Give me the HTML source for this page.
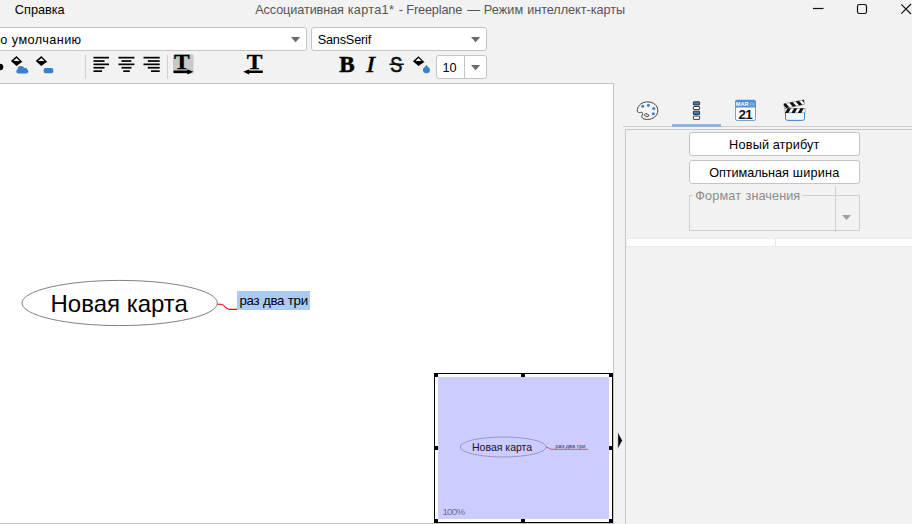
<!DOCTYPE html>
<html lang="ru">
<head>
<meta charset="utf-8">
<title>Ассоциативная карта1* - Freeplane — Режим интеллект-карты</title>
<style>
html,body{margin:0;padding:0;}
body{width:912px;height:524px;overflow:hidden;background:#f2f2f2;position:relative;
  font-family:"Liberation Sans",sans-serif;font-size:13px;color:#000;}
.abs{position:absolute;}
.t{position:absolute;white-space:nowrap;line-height:1;}
.combo{position:absolute;box-sizing:border-box;background:#fff;border:1px solid #c4c4c4;border-radius:3px;}
.btn{position:absolute;box-sizing:border-box;background:#fff;border:1px solid #c4c4c4;border-radius:3px;}
svg{position:absolute;overflow:visible;}
</style>
</head>
<body>

<!-- menu / title row -->
<div id="menu"><span class="t" style="left:14.87px;top:4px;font-size:12.70px;letter-spacing:-0.006px;color:#000;">Справка </span></div>
<div id="title"><span class="t" style="left:255.20px;top:4px;font-size:12.70px;letter-spacing:-0.105px;color:#555555;">Ассоциативная </span><span class="t" style="left:347.74px;top:4px;font-size:12.70px;letter-spacing:0.284px;color:#555555;">карта1* </span><span class="t" style="left:398.65px;top:4px;font-size:12.70px;letter-spacing:0.000px;color:#555555;">- </span><span class="t" style="left:406.28px;top:4px;font-size:12.70px;letter-spacing:-0.139px;color:#555555;">Freeplane </span><span class="t" style="left:467.30px;top:4px;font-size:12.70px;letter-spacing:0.000px;color:#555555;">— </span><span class="t" style="left:483.78px;top:4px;font-size:12.70px;letter-spacing:0.055px;color:#555555;">Режим </span><span class="t" style="left:527.14px;top:4px;font-size:12.70px;letter-spacing:-0.039px;color:#555555;">интеллект-карты </span></div>

<!-- window controls -->
<svg style="left:0;top:0" width="912" height="20">
  <line x1="813" y1="8.5" x2="823.5" y2="8.5" stroke="#111" stroke-width="1.2"/>
  <rect x="857.5" y="4.5" width="9" height="9" rx="1.8" fill="none" stroke="#111" stroke-width="1.2"/>
  <path d="M901.3 4.3 L911 14 M901.3 13.7 L911 4" stroke="#111" stroke-width="1.2" fill="none"/>
</svg>

<!-- combos row -->
<div class="combo" style="left:-10px;top:27px;width:317px;height:24px;"></div>
<div id="c1"><span class="t" style="left:0.19px;top:34px;font-size:12.70px;letter-spacing:0.000px;color:#000;">о </span><span class="t" style="left:11.80px;top:34px;font-size:12.70px;letter-spacing:0.405px;color:#000;">умолчанию </span></div>
<svg style="left:291px;top:37px" width="10" height="6"><path d="M0 0 L9.2 0 L4.6 5.2 Z" fill="#6a6a6a"/></svg>

<div class="combo" style="left:311px;top:27px;width:176px;height:24px;"></div>
<div id="c2"><span class="t" style="left:317.69px;top:34px;font-size:12.70px;letter-spacing:-0.185px;color:#000;">SansSerif </span></div>
<svg style="left:471px;top:37px" width="10" height="6"><path d="M0 0 L9.2 0 L4.6 5.2 Z" fill="#6a6a6a"/></svg>

<!-- toolbar row -->

<svg id="tbsvg" style="left:0;top:52px" width="440" height="30">
  <!-- y offsets relative to 52 -->
  <circle cx="0" cy="15" r="3.3" fill="#000"/>
  <!-- bucket 1 -->
  <g id="bk1" transform="translate(10.9,4.1)">
    <path d="M5.6 0 L11.8 6.2 L10.6 6.2 L5.6 9.9 L0 5 Z" fill="#000"/>
    <path d="M5.6 1.9 L8.7 4.8 L2.5 4.8 Z" fill="#f2f2f2"/>
  </g>
  <g id="cloud" fill="#3a82c8"><rect x="16.3" y="17.3" width="12" height="4.2" rx="2.1"/><circle cx="20.9" cy="17.4" r="3.3"/><circle cx="25" cy="18" r="2.3"/></g>
  <!-- bucket 2 -->
  <g transform="translate(35.7,4.1)">
    <path d="M5.6 0 L11.8 6.2 L10.6 6.2 L5.6 9.9 L0 5 Z" fill="#000"/>
    <path d="M5.6 1.9 L8.7 4.8 L2.5 4.8 Z" fill="#f2f2f2"/>
  </g>
  <rect x="43.7" y="16" width="9.6" height="5.2" rx="1.8" fill="#3a82c8"/>
  <rect x="85" y="3" width="1" height="24" fill="#cdcdcd"/>
  <!-- align left -->
  <g fill="#000">
    <rect x="93.5" y="4.8" width="15.5" height="1.7"/>
    <rect x="93.5" y="8.2" width="11" height="1.7"/>
    <rect x="93.5" y="11.5" width="15.5" height="1.7"/>
    <rect x="93.5" y="14.9" width="11" height="1.7"/>
    <rect x="93.5" y="18.3" width="8.5" height="1.7"/>
    <!-- center -->
    <rect x="118.5" y="4.8" width="15.9" height="1.7"/>
    <rect x="121.5" y="8.2" width="9.9" height="1.7"/>
    <rect x="118.5" y="11.5" width="15.9" height="1.7"/>
    <rect x="121.5" y="14.9" width="9.9" height="1.7"/>
    <rect x="123.2" y="18.3" width="6.6" height="1.7"/>
    <!-- right -->
    <rect x="143.5" y="4.8" width="16.2" height="1.7"/>
    <rect x="147.8" y="8.2" width="11.9" height="1.7"/>
    <rect x="143.5" y="11.5" width="16.2" height="1.7"/>
    <rect x="147.8" y="14.9" width="11.9" height="1.7"/>
    <rect x="151" y="18.3" width="8.7" height="1.7"/>
  </g>
  <rect x="167" y="3" width="1" height="24" fill="#cdcdcd"/>
  <!-- T ltr -->
  <rect x="173" y="2" width="20.5" height="20" rx="2.5" fill="#c8c8c8"/>
  <text id="T1" transform="translate(181.8,16.5) scale(1.12,1)" x="0" y="0" text-anchor="middle" font-family="Liberation Serif, serif" font-weight="bold" font-size="21" fill="#000" stroke="#000" stroke-width="0.3">T</text>
  <path d="M173.5 18.6 H187.3 V17.3 L193.3 19.8 L187.3 22.5 V20.9 H173.5 Z" fill="#000"/>
  <!-- T rtl -->
  <text id="T2" transform="translate(254.7,16.5) scale(1.12,1)" x="0" y="0" text-anchor="middle" font-family="Liberation Serif, serif" font-weight="bold" font-size="21" fill="#000" stroke="#000" stroke-width="0.3">T</text>
  <path d="M262.8 18.6 H249.2 V17.3 L243.2 19.8 L249.2 22.5 V20.9 H262.8 Z" fill="#000"/>
  <!-- B I S -->
  <text id="B" x="339.3" y="20.1" font-family="Liberation Serif, serif" font-weight="bold" font-size="23" fill="#000" stroke="#000" stroke-width="0.6">B</text>
  <text id="I" transform="translate(366.2,20.1) scale(1.12,1)" x="0" y="0" font-family="Liberation Serif, serif" font-style="italic" font-size="23" fill="#000" stroke="#000" stroke-width="0.55">I</text>
  <text id="S" transform="translate(390.3,20) scale(0.84,1)" x="0" y="0" font-family="Liberation Sans, sans-serif" font-size="21.5" fill="#111" stroke="#111" stroke-width="0.7">S</text>
  <rect x="389.4" y="11.5" width="14.5" height="1.5" fill="#111"/>
  <!-- bucket drop -->
  <g transform="translate(412.9,4.2)">
    <path d="M5.6 0 L11.8 6.2 L10.6 6.2 L5.6 9.9 L0 5 Z" fill="#000"/>
    <path d="M5.6 1.9 L8.7 4.8 L2.5 4.8 Z" fill="#f2f2f2"/>
  </g>
  <path d="M426.45 13.1 C427.6 15 430 16.3 430 17.8 a3.55 3.55 0 0 1 -7.1 0 C422.9 16.3 425.3 15 426.45 13.1 Z" fill="#3a82c8"/>
</svg>


<div class="combo" style="left:436px;top:55px;width:51px;height:24px;"></div>
<div class="abs" style="left:464px;top:56px;width:1px;height:22px;background:#c4c4c4;"></div>
<div id="c3"><span class="t" style="left:442.41px;top:62px;font-size:12.70px;letter-spacing:-0.078px;color:#000;">10 </span></div>
<svg style="left:471px;top:65px" width="10" height="6"><path d="M0 0 L9.2 0 L4.6 5.2 Z" fill="#6a6a6a"/></svg>

<!-- map area -->
<div class="abs" id="map" style="left:-1px;top:83px;width:613px;height:439px;background:#fff;border:1px solid #c4c4c4;box-sizing:content-box;"></div>


<!-- map content -->
<svg id="mapsvg" style="left:0;top:0" width="626" height="524">
  <ellipse cx="119.7" cy="303" rx="97.7" ry="22.6" fill="#fff" stroke="#808080" stroke-width="1"/>
  <text id="root" x="50.5" y="311.5" font-family="Liberation Sans, sans-serif" font-size="24" fill="#000">Новая карта</text>
  <path d="M217.4 304.2 L221 304.2 C225.5 304.2 224.5 309.4 229.5 309.4 L237.5 309.4" fill="none" stroke="#ff0000" stroke-width="1.1"/>
  <rect x="237" y="291" width="73" height="19" fill="#a9cbf4"/>
  <text id="child" x="239.4" y="304.8" font-family="Liberation Sans, sans-serif" font-size="13.33" letter-spacing="-0.25" fill="#000">раз два три</text>

  <!-- minimap -->
  <rect x="434.5" y="373.5" width="178" height="149" fill="#fff" stroke="#000" stroke-width="1"/>
  <rect x="438" y="377" width="171" height="142" fill="#ccccff"/>
  <g fill="#000">
    <rect x="434" y="373" width="4" height="4"/><rect x="521" y="373" width="4" height="4"/><rect x="609" y="373" width="4" height="4"/>
    <rect x="434" y="446" width="4" height="4"/><rect x="609" y="446" width="4" height="4"/>
    <rect x="434" y="519" width="4" height="4"/><rect x="521" y="519" width="4" height="4"/><rect x="609" y="519" width="4" height="4"/>
  </g>
  <ellipse cx="503.2" cy="447" rx="43" ry="10" fill="none" stroke="#8a8ab0" stroke-width="0.8"/>
  <text id="mroot" x="472" y="451" font-family="Liberation Sans, sans-serif" font-size="10.5" fill="#15152a">Новая карта</text>
  <path d="M546.2 447.3 C549 447.3 549 449.3 552 449.3 L588 449.3" fill="none" stroke="#e0406a" stroke-width="0.9"/>
  <text id="mchild" x="555.5" y="447.9" font-family="Liberation Sans, sans-serif" font-size="5.6" fill="#33334d">раз два три</text>
  <text id="pct" x="442.4" y="515.2" font-family="Liberation Sans, sans-serif" font-size="9.9" letter-spacing="-0.8" fill="#6f6f8f">100%</text>
  <path d="M617.8 431.8 L617.8 449.2 L622.4 440.5 Z" fill="#000" stroke="#fafafa" stroke-width="0.6"/>
</svg>

<!-- right panel -->

<div class="abs" style="left:623px;top:126px;width:289px;height:1px;background:#cdcdcd;"></div>
<div class="abs" style="left:672px;top:124px;width:49px;height:3px;background:#8fb4e2;"></div>
<div class="abs" style="left:625px;top:129px;width:300px;height:401px;border:1px solid #c8c8c8;box-sizing:border-box;"></div>

<svg id="tabs" style="left:0;top:0" width="912" height="130">
  <!-- palette -->
  <path d="M647.5 101.9 C653.5 101.9 657.8 105.6 657.8 110.6 C657.8 115.8 653 119.4 647.5 119.4 C644 119.4 641.6 118.3 641.8 116.3 C642 114.8 643.2 113.6 642.3 112.6 C641.4 111.7 639.8 113 638.5 112.5 C637.3 112 637.2 110.5 637.4 109.5 C638.2 105 642.2 101.9 647.5 101.9 Z" fill="#f8f8f8" stroke="#2a2a2a" stroke-width="0.9"/>
  <ellipse cx="646.6" cy="115.2" rx="2.3" ry="1.3" fill="#f2f2f2" stroke="#2a2a2a" stroke-width="0.8" transform="rotate(18 646.6 115.2)"/>
  <g fill="#3a82c8"><circle cx="642.7" cy="106.3" r="1.55"/><circle cx="648.4" cy="105.2" r="1.55"/><circle cx="653.8" cy="108.5" r="1.55"/><circle cx="653.3" cy="113.8" r="1.55"/></g>
  <!-- list -->
  <g stroke="#222" stroke-width="0.9">
    <rect x="693.4" y="101.8" width="6.2" height="3.2" rx="0.5" fill="#3a82c8"/>
    <rect x="693.4" y="106.5" width="6.2" height="3.1" rx="0.5" fill="#fff"/>
    <rect x="693.4" y="111.2" width="6.2" height="3.3" rx="0.5" fill="#3a82c8"/>
    <rect x="693.4" y="116.1" width="6.2" height="3.3" rx="0.5" fill="#fff"/>
  </g>
  <!-- calendar -->
  <rect x="735.5" y="100.2" width="20" height="20.3" rx="1.6" fill="#fff" stroke="#5b9ada" stroke-width="0.9"/>
  <path d="M735.2 107.4 V101.6 a1.6 1.6 0 0 1 1.6 -1.6 H754.2 a1.6 1.6 0 0 1 1.6 1.6 V107.4 Z" fill="#4a90d9"/>
  <text x="742.2" y="106.2" text-anchor="middle" font-family="Liberation Sans, sans-serif" font-weight="bold" font-size="5.6" fill="#ffffff">MAR</text>
  <g stroke="#a9cbee" stroke-width="0.7"><line x1="750.2" y1="102.3" x2="750.2" y2="106.4"/><line x1="752" y1="102.3" x2="752" y2="106.4"/><line x1="753.8" y1="102.3" x2="753.8" y2="106.4"/></g>
  <text id="d21" x="745.3" y="118.7" text-anchor="middle" font-family="Liberation Sans, sans-serif" font-weight="bold" font-size="13.4" letter-spacing="-0.6" fill="#111">21</text>
  <!-- clapper -->
  <path d="M785.5 112.5 V118.2 a2.2 2.2 0 0 0 2.2 2.2 H802.3 a2.2 2.2 0 0 0 2.2 -2.2 V112.5 Z" fill="#f7f7f7" stroke="#3a82c8" stroke-width="1"/>
  <rect x="785" y="108.3" width="20" height="4.6" fill="#fff" stroke="#444" stroke-width="0.4"/>
  <g fill="#111"><path d="M787.6 108.3 h3.4 l-2.6 4.6 h-3.4 Z"/><path d="M794 108.3 h3.4 l-2.6 4.6 h-3.4 Z"/><path d="M800.4 108.3 h3.4 l-2.6 4.6 h-3.4 Z"/></g>
  <g transform="translate(0,0.5) rotate(-11.5 785 107.8)">
    <rect x="784.6" y="103.2" width="20.4" height="4.6" fill="#fff" stroke="#444" stroke-width="0.4"/>
    <g fill="#111"><path d="M784.6 103.2 h2.4 l2.6 4.6 h-3.4 l-1.6 -2.8 Z"/><path d="M790.4 103.2 h3.4 l2.6 4.6 h-3.4 Z"/><path d="M796.8 103.2 h3.4 l2.6 4.6 h-3.4 Z"/><path d="M803.2 103.2 h1.8 v3.2 Z"/></g>
  </g>
</svg>

<div class="btn" style="left:689px;top:132px;width:171px;height:24px;"></div>
<div id="b1"><span class="t" style="left:728.98px;top:139px;font-size:12.70px;letter-spacing:0.246px;color:#000;">Новый </span><span class="t" style="left:772.69px;top:139px;font-size:12.70px;letter-spacing:0.115px;color:#000;">атрибут </span></div>
<div class="btn" style="left:689px;top:160px;width:171px;height:24px;"></div>
<div id="b2"><span class="t" style="left:709.19px;top:167px;font-size:12.70px;letter-spacing:-0.065px;color:#000;">Оптимальная </span><span class="t" style="left:792.74px;top:167px;font-size:12.70px;letter-spacing:0.239px;color:#000;">ширина </span></div>

<div class="abs" style="left:689px;top:195px;width:171px;height:36px;border:1px solid #cfcfcf;box-sizing:border-box;"></div>
<div class="abs" style="left:693px;top:194px;width:109px;height:3px;background:#f2f2f2;"></div><div id="fs"><span class="t" style="left:695.26px;top:190px;font-size:12.70px;letter-spacing:0.125px;color:#8c8c8c;">Формат </span><span class="t" style="left:745.55px;top:190px;font-size:12.70px;letter-spacing:0.064px;color:#8c8c8c;">значения </span></div>
<div class="abs" style="left:835px;top:186px;width:1px;height:46px;background:#cfcfcf;"></div>
<svg style="left:842px;top:215px" width="9" height="6"><path d="M0 0 L9 0 L4.5 5 Z" fill="#a0a0a0"/></svg>

<div class="abs" style="left:626px;top:238px;width:286px;height:9px;background:#ececec;"></div><div class="abs" style="left:627px;top:239px;width:285px;height:7px;background:#fff;"></div>
<div class="abs" style="left:775px;top:239px;width:1px;height:7px;background:#e6e6e6;"></div>


</body>
</html>
